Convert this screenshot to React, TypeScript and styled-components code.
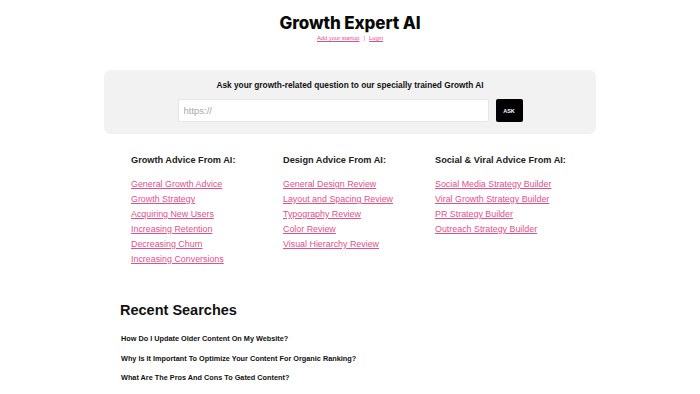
import React from "react";
import styled, { createGlobalStyle } from "styled-components";

const GlobalStyle = createGlobalStyle`
	html, body {
		margin: 0;
		padding: 0;
		background: #ffffff;
		font-family: "Liberation Sans", Arial, sans-serif;
		color: #111;
	}
	* {
		box-sizing: border-box;
	}
`;

const Page = styled.div`
	width: 700px;
	height: 394px;
	overflow: hidden;
	display: flex;
	flex-direction: column;
	align-items: center;
`;

const Header = styled.header`
	display: flex;
	flex-direction: column;
	align-items: center;
	padding-top: 12px;
`;

const Title = styled.h1`
	margin: 0;
	font-family: Inter, "Liberation Sans", sans-serif;
	font-weight: 800;
	font-size: 17px;
	line-height: 22px;
	letter-spacing: -0.1px;
	color: #0a0a0a;
`;

const SubNav = styled.div`
	display: flex;
	align-items: center;
	gap: 4px;
	margin-top: 1px;
	font-size: 5.8px;
	color: #e0508a;
`;

const SubLink = styled.a`
	color: #e0508a;
	text-decoration: underline;
	cursor: pointer;
`;

const AskBox = styled.section`
	width: 492px;
	margin-top: 29px;
	background: #f2f2f2;
	border-radius: 7px;
	padding: 10px 0 12px;
	display: flex;
	flex-direction: column;
	align-items: center;
`;

const AskLabel = styled.div`
	font-size: 8.3px;
	font-weight: 700;
	color: #111;
	line-height: 10px;
`;

const AskRow = styled.div`
	display: flex;
	align-items: center;
	gap: 7px;
	margin-top: 9px;
`;

const UrlInput = styled.input`
	width: 311px;
	height: 23px;
	border: 1px solid #e6e6e6;
	border-radius: 2px;
	background: #fff;
	padding: 0 5px;
	font-family: "Liberation Sans", Arial, sans-serif;
	font-size: 9.5px;
	outline: none;
	&::placeholder {
		color: #a8a8a8;
	}
`;

const AskButton = styled.button`
	width: 27px;
	height: 23px;
	border: none;
	border-radius: 2px;
	background: #000;
	color: #fff;
	font-family: "Liberation Sans", Arial, sans-serif;
	font-size: 5.5px;
	font-weight: 700;
	padding: 0;
	cursor: pointer;
`;

const Columns = styled.div`
	display: grid;
	grid-template-columns: repeat(3, 152px);
	width: 456px;
	margin-top: 21px;
	margin-left: 18px;
`;

const Column = styled.div`
	display: flex;
	flex-direction: column;
`;

const ColumnTitle = styled.h3`
	margin: 0 0 11px;
	font-size: 9.2px;
	line-height: 11px;
	font-weight: 700;
	color: #222;
`;

const AdviceLink = styled.a`
	font-size: 8.9px;
	line-height: 15px;
	color: #e0508a;
	text-decoration: underline;
	cursor: pointer;
	width: fit-content;
`;

const Recent = styled.section`
	width: 460px;
	margin-top: 35px;
`;

const RecentTitle = styled.h2`
	margin: 0 0 15px;
	font-size: 14.5px;
	line-height: 17px;
	font-weight: 700;
	color: #111;
`;

const SearchItem = styled.div`
	font-size: 7.3px;
	line-height: 9px;
	font-weight: 700;
	color: #111;
	margin-bottom: 10.5px;
	padding-left: 1px;
	white-space: nowrap;
`;

const columns = [
	{
		title: "Growth Advice From AI:",
		links: [
			"General Growth Advice",
			"Growth Strategy",
			"Acquiring New Users",
			"Increasing Retention",
			"Decreasing Churn",
			"Increasing Conversions",
		],
	},
	{
		title: "Design Advice From AI:",
		links: [
			"General Design Review",
			"Layout and Spacing Review",
			"Typography Review",
			"Color Review",
			"Visual Hierarchy Review",
		],
	},
	{
		title: "Social & Viral Advice From AI:",
		links: [
			"Social Media Strategy Builder",
			"Viral Growth Strategy Builder",
			"PR Strategy Builder",
			"Outreach Strategy Builder",
		],
	},
];

const searches = [
	"How Do I Update Older Content On My Website?",
	"Why Is It Important To Optimize Your Content For Organic Ranking?",
	"What Are The Pros And Cons To Gated Content?",
	"How Can Marketing Content Strategy Help Your Brand Stand Out From Competitors?",
];

export default function App() {
	return (
		<Page>
			<GlobalStyle />
			<Header>
				<Title>Growth Expert AI</Title>
				<SubNav>
					<SubLink>Add your startup</SubLink>
					<span>|</span>
					<SubLink>Login</SubLink>
				</SubNav>
			</Header>

			<AskBox>
				<AskLabel>Ask your growth-related question to our specially trained Growth AI</AskLabel>
				<AskRow>
					<UrlInput placeholder="https://" />
					<AskButton>ASK</AskButton>
				</AskRow>
			</AskBox>

			<Columns>
				{columns.map((col) => (
					<Column key={col.title}>
						<ColumnTitle>{col.title}</ColumnTitle>
						{col.links.map((l) => (
							<AdviceLink key={l}>{l}</AdviceLink>
						))}
					</Column>
				))}
			</Columns>

			<Recent>
				<RecentTitle>Recent Searches</RecentTitle>
				{searches.map((s) => (
					<SearchItem key={s}>{s}</SearchItem>
				))}
			</Recent>
		</Page>
	);
}
